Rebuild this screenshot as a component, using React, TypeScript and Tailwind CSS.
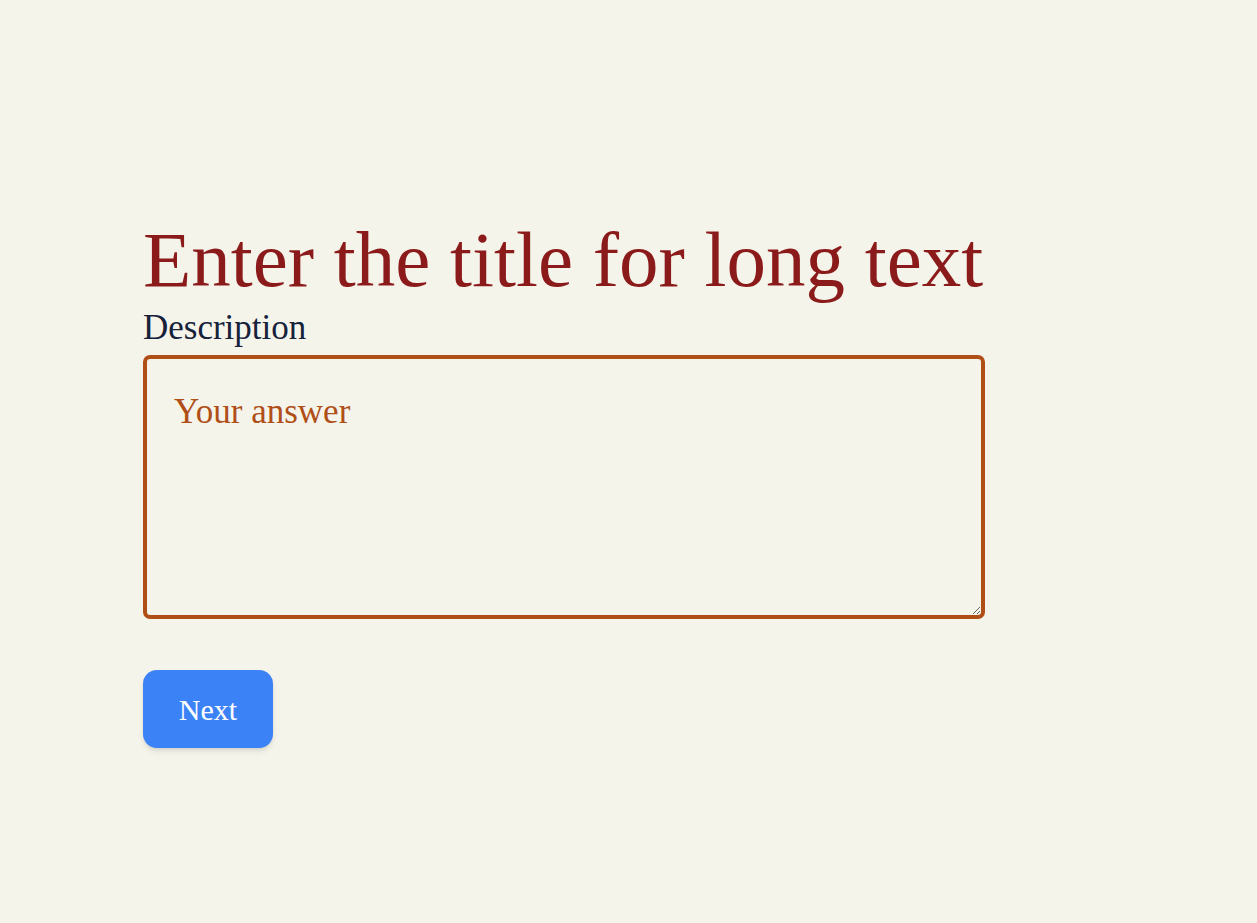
import React from "react";

export default function App() {
  return (
    <div className="min-h-[923px] w-full bg-[#f5f4eb]" style={{ fontFamily: '"Liberation Serif", "Times New Roman", serif' }}>
      <div className="flex flex-col pl-[143px] pt-[216px] w-[1100px]">
        <h1 className="text-[79px] leading-[88px] text-[#8b1a1a] font-normal whitespace-nowrap">Enter the title for long text</h1>
        <label className="text-[35px] leading-[40px] text-[#16213a] mt-[4px]">Description</label>
        <textarea
          placeholder="Your answer"
          className="mt-[7px] h-[264px] w-[842px] rounded-[7px] border-[4px] border-[#b04e17] bg-transparent px-[27px] pt-[33px] pb-[23px] text-[35px] leading-[40px] text-[#b04e17] placeholder:text-[#b04e17] outline-none"
          style={{ fontFamily: '"Liberation Serif", "Times New Roman", serif' }}
        />
        <div className="mt-[51px]">
          <button className="h-[78px] w-[130px] rounded-[14px] bg-[#3b82f6] text-[30px] text-white shadow-md" style={{ fontFamily: '"Liberation Serif", "Times New Roman", serif' }}>
            Next
          </button>
        </div>
      </div>
    </div>
  );
}
